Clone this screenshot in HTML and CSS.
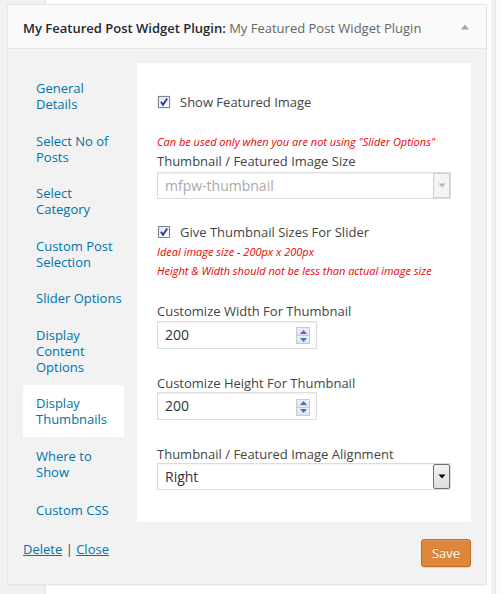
FILE: index.html
```html
<!DOCTYPE html>
<html>
<head>
<meta charset="utf-8">
<link rel="stylesheet" href="styles.css">
</head>
<body>
<div class="widget">
  <div class="widget-top">
    <h3 class="widget-title">My Featured Post Widget Plugin:<span class="in-title"> My Featured Post Widget Plugin</span></h3>
    <svg class="toggle" width="8" height="6" viewBox="0 0 8 6"><path d="M0 5.5 L4 0.5 L8 5.5 Z" fill="#a0a5aa"/></svg>
  </div>
  <div class="widget-inside">
    <div class="tabs-wrap">
      <ul class="tabs">
        <li class="tab">General Details</li>
        <li class="tab">Select No of Posts</li>
        <li class="tab">Select Category</li>
        <li class="tab">Custom Post Selection</li>
        <li class="tab">Slider Options</li>
        <li class="tab">Display Content Options</li>
        <li class="tab active">Display Thumbnails</li>
        <li class="tab">Where to Show</li>
        <li class="tab last">Custom CSS</li>
      </ul>
      <div class="panel">
        <div class="check-row first">
          <svg class="cb" width="14" height="14" viewBox="0 0 14 14"><defs><linearGradient id="cg" x1="0" y1="0" x2="1" y2="1"><stop offset="0" stop-color="#dfe4ee"/><stop offset="1" stop-color="#ffffff"/></linearGradient></defs><rect x="0.5" y="0.5" width="13" height="13" fill="#dbe6f3"/><rect x="1.5" y="1.5" width="11" height="11" fill="url(#cg)" stroke="#7f838c"/><path d="M4 6.8 L6 9.8 L10.2 3.6" stroke="#2c35a6" stroke-width="1.8" fill="none"/></svg>
          <span>Show Featured Image</span>
        </div>
        <p class="note n1">Can be used only when you are not using "Slider Options"</p>
        <p class="label l1">Thumbnail / Featured Image Size</p>
        <div class="select disabled">
          <span class="sel-text">mfpw-thumbnail</span>
          <span class="sel-btn"><svg width="8" height="5" viewBox="0 0 8 5"><path d="M0.5 0.5 L7.5 0.5 L4 4.5 Z" fill="#b4b4b4"/></svg></span>
        </div>
        <div class="check-row second">
          <svg class="cb" width="14" height="14" viewBox="0 0 14 14"><rect x="1.5" y="1.5" width="11" height="11" fill="url(#cg)" stroke="#7f838c"/><path d="M4 6.8 L6 9.8 L10.2 3.6" stroke="#2c35a6" stroke-width="1.8" fill="none"/></svg>
          <span>Give Thumbnail Sizes For Slider</span>
        </div>
        <p class="note n2">Ideal image size - 200px x 200px</p>
        <p class="note n3">Height &amp; Width should not be less than actual image size</p>
        <p class="label l2">Customize Width For Thumbnail</p>
        <div class="num">
          <span class="num-text">200</span>
          <span class="spin"><span class="spin-btn up"><svg width="7" height="4" viewBox="0 0 7 4"><path d="M0 4 L3.5 0 L7 4 Z" fill="#4a6fc4"/></svg></span><span class="spin-btn down"><svg width="7" height="4" viewBox="0 0 7 4"><path d="M0 0 L7 0 L3.5 4 Z" fill="#4a6fc4"/></svg></span></span>
        </div>
        <p class="label l3">Customize Height For Thumbnail</p>
        <div class="num">
          <span class="num-text">200</span>
          <span class="spin"><span class="spin-btn up"><svg width="7" height="4" viewBox="0 0 7 4"><path d="M0 4 L3.5 0 L7 4 Z" fill="#4a6fc4"/></svg></span><span class="spin-btn down"><svg width="7" height="4" viewBox="0 0 7 4"><path d="M0 0 L7 0 L3.5 4 Z" fill="#4a6fc4"/></svg></span></span>
        </div>
        <p class="label l4">Thumbnail / Featured Image Alignment</p>
        <div class="select active-select">
          <span class="sel-text">Right</span>
          <span class="sel-btn"><svg width="8" height="5" viewBox="0 0 8 5"><path d="M0.5 0.5 L7.5 0.5 L4 4.5 Z" fill="#000"/></svg></span>
        </div>
      </div>
    </div>
    <div class="controls">
      <div class="links"><a class="lnk">Delete</a> | <a class="lnk">Close</a></div>
      <button class="save">Save</button>
    </div>
  </div>
</div>
</body>
</html>
```

FILE: styles.css
```css
* { box-sizing: border-box; }
html, body { margin: 0; padding: 0; }
body {
  width: 502px;
  height: 594px;
  overflow: hidden;
  font-family: "Open Sans", "Liberation Sans", sans-serif;
  background: linear-gradient(to right, #f1f1f1 0, #f1f1f1 45px, #e4e4e4 45px, #e4e4e4 46px, #ffffff 46px, #ffffff 491px, #f1f1f1 491px, #f1f1f1 495px, #e4e4e4 495px, #e4e4e4 496px, #fbfbfb 496px);
  padding: 4px 15px 0 7px;
}
.widget {
  width: 480px;
  border: 1px solid #e5e5e5;
  background: #f2f2f2;
  box-shadow: 0 1px 1px rgba(0,0,0,.04);
}
.widget-top {
  height: 44px;
  background: #fafafa;
  border-bottom: 1px solid #e5e5e5;
  display: flex;
  align-items: center;
  justify-content: space-between;
  padding: 0 17px 0 15px;
}
.widget-title {
  margin: 0;
  font-size: 13px;
  font-weight: 600;
  color: #23282d;
  line-height: 20px;
  position: relative;
  top: 1px;
}
.in-title {
  font-weight: 400;
  color: #666;
}
.toggle { display: block; margin-top: 1px; }
.widget-inside {
  padding: 0 15px 0 15px;
  height: 535px;
}
.tabs-wrap {
  display: flex;
  gap: 13px;
  align-items: flex-start;
  padding-top: 14px;
}
.tabs {
  list-style: none;
  margin: 6.5px 0 0 0;
  padding: 0;
  width: 101px;
  flex: none;
}
.tab {
  font-size: 13px;
  line-height: 16px;
  color: #0073aa;
  padding: 10.5px 2px 10px 13px;
}
.tab.last { padding-top: 12px; padding-bottom: 8.5px; }
.tab.active { background: #fff; }
.panel {
  width: 334px;
  background: #fff;
  padding: 29px 20px 32px 20px;
  font-size: 13px;
  color: #444;
}
.panel p { margin: 0; }
.check-row {
  display: flex;
  align-items: center;
  height: 20px;
  line-height: 20px;
}
.check-row .cb { margin: 0 9px 0 0; flex: none; }
.check-row span { color: #444; }
.check-row.second { margin-top: 23px; }
.note {
  font-size: 11px;
  font-style: italic;
  color: #ee0000;
  line-height: 19px;
}
.n1 { margin-top: 20px !important; }
.label { line-height: 18px; color: #444; }
.l1 { margin-top: 1px !important; }
.l2 { margin-top: 22px !important; }
.l3 { margin-top: 25px !important; }
.l4 { margin-top: 25px !important; }
.select {
  height: 27px;
  width: 294px;
  margin-top: 2px;
  border: 1px solid #ddd;
  display: flex;
  align-items: center;
  justify-content: space-between;
  padding-left: 7px;
  box-shadow: inset 0 1px 2px rgba(0,0,0,.05);
}
.select .sel-text { font-size: 14px; line-height: 20px; }
.select.disabled .sel-text { color: #a9a9a9; }
.select.active-select .sel-text { color: #333; }
.select.disabled .sel-btn {
  width: 17px;
  height: 25px;
  border: 1px solid #cfcfcf;
  background: #f4f4f4;
  display: flex;
  align-items: center;
  justify-content: center;
}
.select.active-select { margin-top: 0; }
.select.active-select .sel-btn {
  width: 17px;
  height: 25px;
  border: 1px solid #707070;
  border-radius: 2px;
  background: linear-gradient(#f2f2f2, #dedede);
  display: flex;
  align-items: center;
  justify-content: center;
}
.num {
  width: 160px;
  height: 28px;
  border: 1px solid #ddd;
  box-shadow: inset 0 1px 2px rgba(0,0,0,.07);
  display: flex;
  align-items: center;
  justify-content: space-between;
  padding: 0 6px 0 7px;
  margin-top: 0.5px;
}
.num-text { font-size: 14px; color: #333; line-height: 20px; }
.spin {
  display: flex;
  flex-direction: column;
  width: 14px;
  margin-top: 2px;
}
.spin-btn {
  height: 9px;
  border: 1px solid #c9ccd3;
  background: linear-gradient(#eef1f6, #dde3ec);
  display: flex;
  align-items: center;
  justify-content: center;
}
.spin-btn.down { border-top: none; height: 8px; }
.controls {
  display: flex;
  justify-content: space-between;
  align-items: flex-start;
  margin-top: 12.5px;
}
.links {
  font-size: 13px;
  color: #444;
  line-height: 18px;
  margin-top: 1px;
}
.lnk { color: #0073aa; text-decoration: underline; }
.save {
  width: 50px;
  height: 28px;
  background: #e0863b;
  border: 1px solid #c06b26;
  border-radius: 3px;
  color: #fff;
  font-family: "Open Sans", "Liberation Sans", sans-serif;
  font-size: 13px;
  line-height: 24px;
  padding: 0;
  box-shadow: inset 0 1px 0 rgba(255,255,255,.15), 0 1px 0 rgba(0,0,0,.1);
  text-shadow: 0 -1px 0 rgba(0,0,0,.15);
}
```
